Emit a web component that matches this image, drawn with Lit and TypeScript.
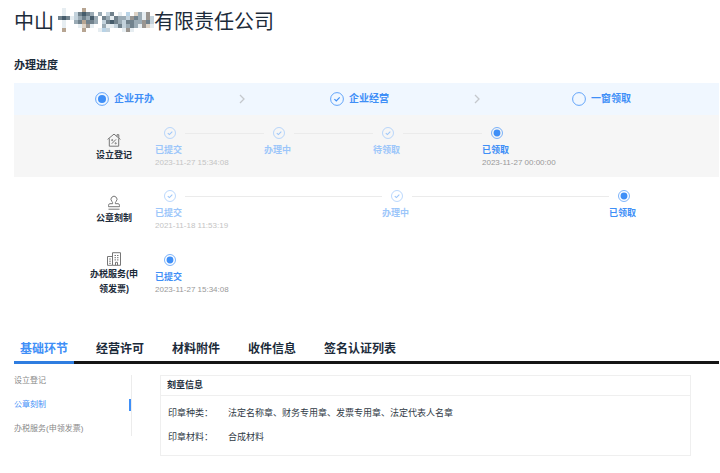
import { LitElement, html, svg, css, nothing } from "lit";
import { customElement, property, state } from "lit/decorators.js";
import { classMap } from "lit/directives/class-map.js";

type Status = "done" | "current" | "todo";
interface Step { label: string; status: Status; date?: string }
interface Service { name: string; icon: string; steps: Step[] }

const STAGES: Step[] = [
  { label: "企业开办", status: "current" },
  { label: "企业经营", status: "done" },
  { label: "一窗领取", status: "todo" },
];

const SERVICES: Service[] = [
  {
    name: "设立登记", icon: "house",
    steps: [
      { label: "已提交", status: "done", date: "2023-11-27 15:34:08" },
      { label: "办理中", status: "done" },
      { label: "待领取", status: "done" },
      { label: "已领取", status: "current", date: "2023-11-27 00:00:00" },
    ],
  },
  {
    name: "公章刻制", icon: "stamp",
    steps: [
      { label: "已提交", status: "done", date: "2021-11-18 11:53:19" },
      { label: "办理中", status: "done" },
      { label: "已领取", status: "current" },
    ],
  },
  {
    name: "办税服务(申领发票)", icon: "building",
    steps: [{ label: "已提交", status: "current", date: "2023-11-27 15:34:08" }],
  },
];

const TABS = ["基础环节", "经营许可", "材料附件", "收件信息", "签名认证列表"];
const SECTIONS = ["设立登记", "公章刻制", "办税服务(申领发票)"];

// Masked part of the company name: rows of 25 tiles, "." is an empty tile.
const TONES: Record<string, string> = {
  a: "#e6edf1", b: "#c3d2dc", c: "#9babb5", d: "#71828d", e: "#465c6b",
  f: "#ded3c6", g: "#b7a592", h: "#9a9590", i: "#b9d3e6",
};
const MASK = [
  "..a....g.................",
  "..a..bdedc.c.bd.a.i.fcah.",
  ".dedabcdcec.dcadccbhdcahb",
  "..a..cdgddc.bdedcbddcchdb",
  "..a...afha..caabdbcdcahfa",
  "..g....g...aib...aha.....",
];

@customElement("status-dot")
class StatusDot extends LitElement {
  @property() status: Status = "todo";
  static styles = css`
    :host { display: block; }
    svg { display: block; width: 100%; height: 100%; fill: none; stroke: currentColor; }
    .core { fill: currentColor; stroke: none; }
  `;
  render() {
    return html`<svg viewBox="0 0 14 14" aria-hidden="true">
      <circle cx="7" cy="7" r="6.4" stroke-width="0.8" />
      ${this.status === "current" ? svg`<circle class="core" cx="7" cy="7" r="4" />` : nothing}
      ${this.status === "done" ? svg`<path d="M4.4 7.1 6.3 8.9 9.7 5.3" stroke-width="1.2" />` : nothing}
    </svg>`;
  }
}

@customElement("app-root")
class AppRoot extends LitElement {
  @state() private tab = 0;
  @state() private section = 1;

  static styles = css`
    :host {
      display: block;
      padding: 7px 1px 16px 14px;
      color: #1c2b3a;
      background: #fff;
      font-family: "Liberation Sans", "Noto Sans CJK SC", sans-serif;
      font-size: 9px;
      line-height: 14px;
    }
    * { box-sizing: border-box; }
    h1, h2, h3, ol, ul, dl, dd { margin: 0; padding: 0; list-style: none; }
    button { border: 0; padding: 0; background: none; font: inherit; color: inherit; cursor: pointer; }
    .title { display: flex; font-size: 20px; line-height: 30px; font-weight: 400; }
    .mask { width: 100px; height: 24px; margin-top: 1px; }
    .heading { margin-top: 19px; font-size: 11px; line-height: 18px; }

    .stages { display: flex; margin-top: 9px; background: #f0f7ff; color: #3f8ff7; }
    .stage { flex: 1; display: flex; align-items: center; height: 32px; }
    .stage-name { flex: 1; display: flex; align-items: center; justify-content: center; gap: 5px; font-size: 10px; font-weight: 700; }
    .stage-name status-dot { width: 14px; height: 14px; }
    .arrow { width: 14px; height: 10px; fill: none; stroke: #c4c8cc; }

    .service { display: flex; align-items: center; min-height: 64px; padding-top: 2px; }
    .service.shaded { min-height: 62px; background: #f6f6f6; }
    .service-name { flex: none; width: 50px; margin-left: 75px; text-align: center; font-size: 9px; line-height: 15px; }
    .service-name svg { display: block; width: 16px; height: 16px; margin: 0 auto; fill: none; stroke: #777; }
    .steps { flex: 1; display: grid; margin-left: 16px; padding-top: 2px; }
    .count4 { grid-template-columns: repeat(3, 1fr) 237px; }
    .count3 { grid-template-columns: repeat(2, 1fr) 110px; }
    .track { display: flex; align-items: center; }
    .track status-dot { width: 12px; height: 12px; margin: 0 9px; }
    .line { flex: 1; height: 1px; background: #ebebeb; }
    .step { min-width: 0; color: #3f8ff7; }
    .step.done { color: #9cc6fa; }
    .step-label { margin-top: 4px; font-weight: 700; }
    .date { display: block; font-size: 8px; line-height: 12px; color: #999; white-space: nowrap; }
    .done .date { color: #c4c4c4; }

    .tabs { display: flex; gap: 16px; margin-top: 32px; border-bottom: 3px solid #151515; }
    .tab { height: 27px; margin-bottom: -3px; padding: 0 6px 1px; border-bottom: 3px solid transparent; font-size: 12px; line-height: 18px; font-weight: 700; white-space: nowrap; }
    .tab.active { color: #3f8ff7; border-color: #2f7de0; }

    .detail { display: flex; align-items: flex-start; margin-top: 11px; }
    .side { flex: none; width: 118px; height: 61px; border-right: 1px solid #ececec; }
    .side button { display: block; width: 117px; height: 12px; margin-bottom: 12px; border-right: 2px solid transparent; text-align: left; font-size: 8px; line-height: 12px; color: #888; }
    .side button.active { color: #3f8ff7; border-color: #3f8ff7; }
    .panel { flex: 1; margin: 0 28px; border: 1px solid #efefef; }
    .panel-title { padding: 0 6px; font-size: 9px; line-height: 19px; border-bottom: 1px solid #efefef; }
    .facts { display: grid; grid-template-columns: 60px 1fr; row-gap: 10px; padding: 10px 7px 11px; color: #303a45; }
  `;

  private icon(name: string) {
    if (name === "house")
      return html`<svg viewBox="0 0 16 16" aria-hidden="true"><path d="M1.6 7.4 8 2.1l6.4 5.3M11 4.5V2.7h1.8v3.2M3.3 6.4v7.8h9.4V6.4M5.8 11.7l4.2-4.3"/><circle cx="6.2" cy="8.1" r=".6"/><circle cx="9.7" cy="11.3" r=".6"/></svg>`;
    if (name === "stamp")
      return html`<svg viewBox="0 0 16 16" aria-hidden="true"><path d="M6.6 8.7c.2-1.1-.1-1.6-.8-2.4a3 3 0 1 1 4.4 0c-.7.8-1 1.3-.8 2.4M6.6 8.7H3.9q-1.4 0-1.4 2v1h11v-1q0-2-1.4-2H9.4M2.5 14.2h11"/></svg>`;
    return html`<svg viewBox="0 0 16 16" aria-hidden="true"><path d="M6.5 14.3V1.7h8v12.6zM6.5 5.5h-5v8.8h5M9.5 14.3v-3h2v3M8.5 4.5H10M11 4.5h1.5M8.5 6.7H10M11 6.7h1.5M8.5 8.9H10M11 8.9h1.5M3.2 8h1.6M3.2 10.2h1.6M3.2 12.3h1.6"/></svg>`;
  }

  render() {
    return html`
      <h1 class="title">
        <span>中山</span>
        <svg class="mask" viewBox="0 0 100 24" aria-hidden="true" shape-rendering="crispEdges">
          ${MASK.map((row, y) => [...row].map((t, x) =>
            TONES[t] ? svg`<rect x=${x * 4} y=${y * 4} width="4" height="4" fill=${TONES[t]} />` : nothing))}
        </svg>
        <span>有限责任公司</span>
      </h1>
      <h2 class="heading">办理进度</h2>
      <ol class="stages">
        ${STAGES.map((s, i) => html`<li class="stage">
          <span class="stage-name"><status-dot .status=${s.status}></status-dot>${s.label}</span>
          ${i < STAGES.length - 1
            ? html`<svg class="arrow" viewBox="0 0 14 10" aria-hidden="true"><path d="M5 1l4 4-4 4" stroke-width="1.3" /></svg>`
            : nothing}
        </li>`)}
      </ol>
      ${SERVICES.map((s, i) => html`<section class=${classMap({ service: true, shaded: i === 0 })}>
        <h3 class="service-name">${this.icon(s.icon)}${s.name}</h3>
        <ol class="steps count${s.steps.length}">
          ${s.steps.map((p, n) => html`<li class="step ${p.status}">
            <div class="track">
              <status-dot .status=${p.status}></status-dot>
              ${n < s.steps.length - 1 ? html`<span class="line"></span>` : nothing}
            </div>
            <div class="step-label">${p.label}</div>
            ${p.date ? html`<time class="date">${p.date}</time>` : nothing}
          </li>`)}
        </ol>
      </section>`)}
      <div class="tabs" role="tablist">
        ${TABS.map((t, i) => html`<button role="tab" aria-selected=${i === this.tab}
          class=${classMap({ tab: true, active: i === this.tab })} @click=${() => (this.tab = i)}>${t}</button>`)}
      </div>
      <div class="detail">
        <nav class="side">
          ${SECTIONS.map((t, i) => html`<button class=${classMap({ active: i === this.section })}
            @click=${() => (this.section = i)}>${t}</button>`)}
        </nav>
        <section class="panel">
          <h3 class="panel-title">刻章信息</h3>
          <dl class="facts">
            <dt>印章种类：</dt><dd>法定名称章、财务专用章、发票专用章、法定代表人名章</dd>
            <dt>印章材料：</dt><dd>合成材料</dd>
          </dl>
        </section>
      </div>
    `;
  }
}
